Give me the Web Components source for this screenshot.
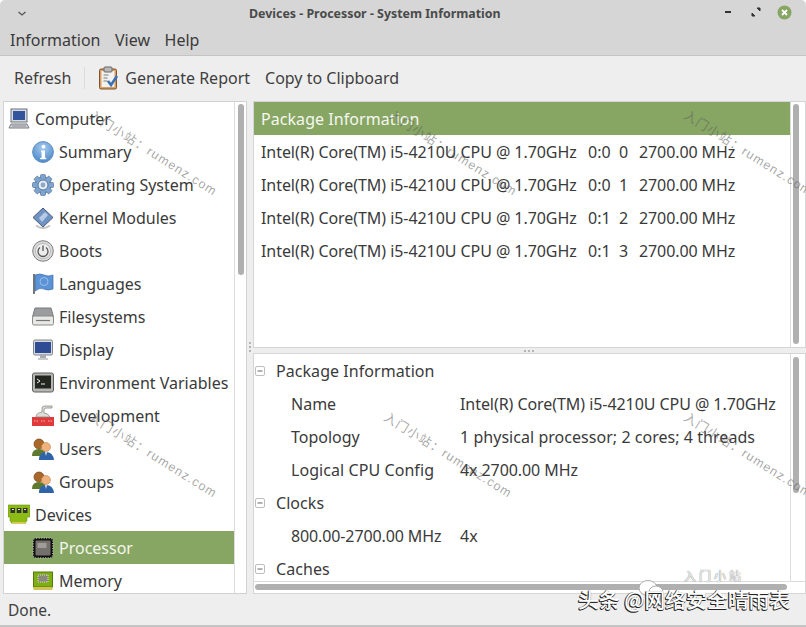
<!DOCTYPE html>
<html lang="en"><head><meta charset="utf-8"><title>Devices - Processor - System Information</title>
<style>
html,body{margin:0;padding:0;background:#fff;overflow:hidden}
body{width:806px;height:627px;font:16px/22px "Noto Sans","Open Sans",sans-serif;color:#3a3a3a}
</style></head><body>
<template id="t-icons">
<svg viewBox="0 0 22 22" data-k="computer"><rect x="3" y="1" width="16" height="13" fill="#d8dce2" stroke="#6b7078"/><rect x="5" y="3" width="12" height="9" fill="#31549c"/><path d="M3 16h16l2 4H1z" fill="#cfd2d6" stroke="#7a7d82"/><path d="M4 18h14" stroke="#8a8d92"/></svg>
<svg viewBox="0 0 22 22" data-k="info"><defs><radialGradient id="ig" cx=".5" cy=".3" r=".8"><stop offset="0" stop-color="#a9cdf0"/><stop offset="1" stop-color="#3f7ec2"/></radialGradient></defs><circle cx="11" cy="11" r="10.400" fill="url(#ig)" stroke="#5d8fc4"/><circle cx="11.500" cy="5.600" r="1.900" fill="#fff"/><path d="M9 9.400h4v7.400h1.300v1.400H8.200v-1.400h1.400v-6H9z" fill="#fff"/></svg>
<svg viewBox="0 0 22 22" data-k="gear"><g fill="#7ea4cf" stroke="#54759c" stroke-width=".7"><circle cx="11" cy="11" r="8.200"/><rect x="8.500" y=".5" width="5" height="21" rx="1"/><rect x="8.500" y=".5" width="5" height="21" rx="1" transform="rotate(45 11 11)"/><rect x="8.500" y=".5" width="5" height="21" rx="1" transform="rotate(90 11 11)"/><rect x="8.500" y=".5" width="5" height="21" rx="1" transform="rotate(135 11 11)"/></g><circle cx="11" cy="11" r="7" fill="#7ea4cf"/><circle cx="11" cy="11" r="5" fill="#e6edf5" stroke="#54759c"/><circle cx="11" cy="11" r="2.400" fill="#8fa8c4"/></svg>
<svg viewBox="0 0 22 22" data-k="kernel"><path d="M11 1l10 9.500L11 20 1 10.500z" fill="#6f93c4" stroke="#4b5b72"/><path d="M7 11l6-6 3 3-6 7z" fill="#b7cbe4"/><path d="M4 18.500q7 5 14 0" fill="none" stroke="#c4c4c4" stroke-width="2"/></svg>
<svg viewBox="0 0 22 22" data-k="boots"><circle cx="11" cy="11" r="10.300" fill="#d9d9d9" stroke="#808080"/><circle cx="11" cy="11" r="7.600" fill="#ececec" stroke="#bcbcbc"/><path d="M8 7.500a5 5 0 1 0 6 0" fill="none" stroke="#555" stroke-width="1.300"/><path d="M11 5.500v5.500" stroke="#555" stroke-width="1.300"/></svg>
<svg viewBox="0 0 22 22" data-k="lang"><path d="M1 1h2v20H1z" fill="#777"/><path d="M3 2q5-2 9 0t9 0v14q-5 2-9 0t-9 2z" fill="#5b93d6" stroke="#3e6ea8" stroke-width=".7"/><circle cx="12" cy="8.500" r="4" fill="none" stroke="#9cc1ea"/></svg>
<svg viewBox="0 0 22 22" data-k="fs"><path d="M3 2h16l2.500 9H.5z" fill="#9a9c9e" stroke="#77797b"/><rect x=".5" y="10" width="21" height="9" rx="1.500" fill="#e8e8e6" stroke="#8a8a88"/><path d="M4 14.500h14" stroke="#777" stroke-width="1.200"/></svg>
<svg viewBox="0 0 22 22" data-k="display"><rect x="1.500" y="1" width="19" height="15" rx="1.500" fill="#d6d9dd" stroke="#80858c"/><rect x="3" y="3" width="16" height="11" fill="#2f4c94"/><path d="M8 16h6v3H8z" fill="#a9acb0"/><path d="M6 19h10v2H6z" fill="#c8cacc"/></svg>
<svg viewBox="0 0 22 22" data-k="env"><rect x=".5" y="1" width="21" height="19" rx="2" fill="#b6b6b2" stroke="#5f5f5c"/><rect x="3" y="3.500" width="16" height="13" fill="#23261f"/><path d="M5 7l3 2-3 2" fill="none" stroke="#eee"/><path d="M9 12h4" stroke="#eee"/></svg>
<svg viewBox="0 0 22 22" data-k="dev"><path d="M0 12h22v9H0z" fill="#e03a3a"/><path d="M4 12q0-4 6-5V3q0-2 3-2h7v2h-6q-2 0-2 2v3q4 0 6 4z" fill="#dcdcd8" stroke="#8b8b86" stroke-width=".8"/><path d="M2 16h5M9 16h5M16 16h4" stroke="#f4b0b0" stroke-dasharray="1.500 1"/></svg>
<svg viewBox="0 0 22 22" data-k="users"><circle cx="7" cy="6" r="5" fill="#a9682a" stroke="#6e4519" stroke-width=".7"/><path d="M0 18q0-7 7-7t8 7z" fill="#5e7a2d"/><circle cx="14" cy="9" r="4.500" fill="#f0b27c" stroke="#c0854e" stroke-width=".6"/><path d="M7 22q0-8 7-8t8 8z" fill="#2f64a8"/><path d="M13 14h2l-1 4z" fill="#e7eef7"/></svg>
<svg viewBox="0 0 22 22" data-k="devices"><path d="M0 1h22v12h-3v4h-1v2H3v-2H2v-4H0z" fill="#8cbc14" stroke="#6c9410" stroke-width=".6"/><rect x="2.500" y="4" width="4.500" height="5" fill="#333"/><rect x="8.800" y="4" width="4.500" height="5" fill="#333"/><rect x="15" y="4" width="4.500" height="5" fill="#333"/><path d="M4 5.500h2M10 5.500h2M16 5.500h2" stroke="#d8e6b0"/><path d="M4 18h14v2H4z" fill="#d5c95a"/></svg>
<svg viewBox="0 0 22 22" data-k="cpu"><rect x="1" y="1" width="20" height="20" rx="3" fill="#111"/><rect x="1.200" y="1.200" width="19.600" height="19.600" rx="3" fill="none" stroke="#ddd" stroke-dasharray="1 1.500"/><rect x="3.500" y="3.500" width="15" height="15" rx="1" fill="#74706c"/><path d="M5.500 6h9v5h-9z" fill="#a09c98"/></svg>
<svg viewBox="0 0 22 22" data-k="memory"><rect x="1.500" y="2" width="19" height="15" fill="#7fae14" stroke="#567a08"/><rect x="6" y="5" width="10" height="7" fill="#8a8a7a" stroke="#ddd" stroke-dasharray="1 1"/><path d="M1.500 17h19v3h-19z" fill="#d0c458"/></svg>
</template>

<script>
const iconTpl=document.getElementById('t-icons');
class BaseEl extends HTMLElement{
  render(css,html){const s=this.attachShadow({mode:'open'});s.innerHTML=`<style>${css}</style>${html}`;return s;}
}
class TitleBar extends BaseEl{connectedCallback(){this.render(`
  :host{display:flex;align-items:center;height:27px;font:700 12.400px/16px "Noto Sans",sans-serif;color:#4a4a4a}
  .l{width:249px;box-sizing:border-box;padding-left:16px;display:flex;flex:none}
  .r{margin-left:auto;display:flex;align-items:center;padding-right:8px;padding-bottom:3px}
  svg{display:block}
  .b{width:28px;display:flex;justify-content:center}
  `,`<div class="l"><svg width="12" height="8" viewBox="0 0 12 8"><path d="M2.500 2l3.500 3 3.500-3" fill="none" stroke="#555" stroke-width="1.300"/></svg></div>
  <div>Devices - Processor - System Information</div>
  <div class="r"><span class="b"><svg width="8" height="4" viewBox="0 0 8 4"><path d="M1 2h6" stroke="#333" stroke-width="2"/></svg></span>
  <span class="b"><svg width="10" height="10" viewBox="0 0 10 10"><path d="M6 1h3v3zM4 9H1V6z" fill="#333" stroke="#333"/></svg></span>
  <span class="b"><svg width="15" height="15" viewBox="0 0 15 15"><circle cx="7.500" cy="7.500" r="7" fill="#87a663"/><path d="M5 5l5 5M10 5l-5 5" stroke="#fff" stroke-width="1.800"/></svg></span></div>`)}}
class MenuBar extends BaseEl{connectedCallback(){this.render(`
  :host{display:flex;gap:14.500px;height:28px;padding-left:10px;align-items:center;box-sizing:border-box;padding-bottom:3px;font-size:16px}
  `,`<slot></slot>`)}}
class ToolBar extends BaseEl{connectedCallback(){this.render(`
  :host{display:flex;align-items:center;height:46px;background:#eeeeee;border-top:1px solid #c4c4c4;box-sizing:border-box;padding:0 0 1px 14px;font-size:16px;color:#3f3f3f}
  .sep{width:1px;height:22px;background:#dcdcdc;margin:0 13px 0 13px}
  .g{display:flex;align-items:center;gap:5px}
  .c{margin-left:15px}
  `,`<span>Refresh</span><span class="sep"></span>
  <span class="g"><svg width="22" height="24" viewBox="0 0 22 24"><rect x="1.500" y="3" width="17" height="20" rx="1.500" fill="#d69e63" stroke="#80522a"/><rect x="3.500" y="5" width="13" height="16" fill="#f1f1ee"/><rect x="6" y="1" width="8" height="5" rx="1" fill="#b9b9b9" stroke="#666"/><path d="M5.500 9h5M5.500 12h4M5.500 15h4" stroke="#7d7d7d"/><path d="M10 15l3 4 6-9" fill="none" stroke="#3d6fb5" stroke-width="2.600"/></svg>Generate Report</span>
  <span class="c">Copy to Clipboard</span>`)}}
class VScroll extends BaseEl{connectedCallback(){this.render(`
  :host{display:block;position:relative;background:#fff;width:${this.getAttribute('w')||15}px;flex:none;box-sizing:border-box;border-left:1px solid #dcdcdc}
  i{display:block;position:absolute;left:${this.getAttribute('l')||2}px;width:6px;border-radius:3px;background:#b0b0b0;top:${this.getAttribute('top')||2}px;height:${this.getAttribute('h')}px}
  `,`<i></i>`)}}
class TreeRow extends BaseEl{connectedCallback(){
  const k=this.getAttribute('icon');const lvl=+this.getAttribute('lvl')||0;const sel=this.hasAttribute('sel');
  this.render(`
  :host{display:flex;align-items:center;height:33px;box-sizing:border-box;padding-left:${lvl?28:4}px;gap:5px;white-space:nowrap;font-size:16px;${sel?'background:#87a663;color:#f3f6ee;':''}}
  svg{display:block;width:22px;height:22px;flex:none}
  `,`<slot></slot>`);
  const svg=iconTpl.content.querySelector(`svg[data-k="${k}"]`).cloneNode(true);
  svg.setAttribute('width','22');svg.setAttribute('height','22');
  this.shadowRoot.insertBefore(svg,this.shadowRoot.querySelector('slot'));
}}
class SideTree extends BaseEl{connectedCallback(){this.render(`
  :host{display:flex;background:#fff;border:1px solid #d2d2d2;box-sizing:border-box;overflow:hidden;min-height:0}
  .list{flex:1;min-width:0;overflow:hidden}
  `,`<div class="list"><slot></slot></div><v-scroll w="12" l="3" top="2" h="171"></v-scroll>`)}}
class CpuList extends BaseEl{connectedCallback(){this.render(`
  :host{display:flex;background:#fff;height:247px;box-sizing:border-box;border:1px solid #d6d6d6}
  .m{flex:1;min-width:0}
  .h{height:33px;background:#87a663;color:#f5f7f0;display:flex;align-items:center;padding-left:7px;letter-spacing:.06px}
  `,`<div class="m"><div class="h">Package Information</div><slot></slot></div><v-scroll top="2" h="240"></v-scroll>`)}}
class CpuRow extends BaseEl{connectedCallback(){this.render(`
  :host{display:grid;grid-template-columns:327px 31px 20px auto;height:33px;align-items:center;padding-left:7px;white-space:nowrap}
  .m{letter-spacing:-.06px}
  .f{letter-spacing:-.1px}
  `,`<span class="m">${this.getAttribute('m')}</span><span>${this.getAttribute('a')}</span><span>${this.getAttribute('b')}</span><span class="f">${this.getAttribute('f')}</span>`)}}
class DetailPane extends BaseEl{connectedCallback(){this.render(`
  :host{display:flex;flex-direction:column;flex:1;min-height:0;background:#fff;box-sizing:border-box;border:1px solid #d6d6d6;overflow:hidden}
  .top{display:flex;flex:1;min-height:0}
  .m{flex:1;min-width:0;overflow:hidden}
  .hs{height:12px;flex:none;position:relative;border-top:1px solid #dcdcdc;box-sizing:border-box;background:#fff}
  .hs i{position:absolute;left:1px;right:18px;top:2px;height:6px;border-radius:3px;background:#b0b0b0}
  `,`<div class="top"><div class="m"><slot></slot></div><v-scroll top="3" h="136"></v-scroll></div><div class="hs"><i></i></div>`)}}
class DetailHead extends BaseEl{connectedCallback(){this.render(`
  :host{display:flex;align-items:center;height:33px;padding-left:1px;gap:11px;letter-spacing:.06px}
  svg{display:block;flex:none}
  `,`<svg width="10" height="10" viewBox="0 0 10 10"><rect x=".5" y=".5" width="9" height="9" rx="1.500" fill="#fff" stroke="#bdbdbd"/><path d="M2.500 5h5" stroke="#666"/></svg><slot></slot>`)}}
class DetailRow extends BaseEl{connectedCallback(){this.render(`
  :host{display:grid;grid-template-columns:169px auto;height:33px;align-items:center;padding-left:37px;white-space:nowrap}
  .k{letter-spacing:${this.getAttribute('ks')||0}px}
  .v{letter-spacing:${this.getAttribute('vs')||0}px}
  `,`<span class="k">${this.getAttribute('k')}</span><span class="v">${this.getAttribute('v')}</span>`)}}
class StatusBar extends BaseEl{connectedCallback(){this.render(`
  :host{display:flex;align-items:center;height:31px;padding-left:8px;background:#eeeeee;box-sizing:border-box;font-size:15.500px;color:#3f3f3f}
  `,`<slot></slot>`)}}
class WaterMark extends BaseEl{connectedCallback(){this.render(`
  :host{position:absolute;left:${this.getAttribute('x')}px;top:${this.getAttribute('y')}px;transform-origin:0 50%;transform:rotate(32deg);font:12.500px/16px "Liberation Sans","Noto Sans CJK SC",sans-serif;letter-spacing:1.150px;color:rgba(90,90,90,.55);white-space:nowrap;pointer-events:none}
  `,`入门小站：rumenz.com`)}}
class AppWindow extends BaseEl{connectedCallback(){this.render(`
  :host{display:flex;flex-direction:column;position:relative;width:806px;height:627px;background:#eeeeee;box-sizing:border-box;border-bottom:2px solid #c4c4c4;overflow:hidden;border-radius:5px 5px 0 0}
  .chrome{background:#d6d6d6;flex:none}
  .body{flex:1;min-height:0;display:grid;grid-template-columns:244px 1fr;gap:6px;padding:0 0 0 3px;background:#eee}
  .right{display:flex;flex-direction:column;min-height:0}
  .grip{height:5px;flex:none;display:flex;justify-content:center;align-items:center;background:#eee}
  .grip b{width:13px;height:2px;background:radial-gradient(circle,#b4b4b4 1px,transparent 1.200px) 0 0/4px 2px}
  .vg{display:flex;align-items:center;justify-content:center;position:absolute;left:247px;top:340px;width:6px;height:14px}
  .vg b{width:2px;height:13px;background:radial-gradient(circle,#b4b4b4 1px,transparent 1.200px) 0 0/2px 4px}
  `,`<div class="chrome"><slot name="title"></slot><slot name="menu"></slot></div><slot name="tools"></slot>
  <div class="body"><slot name="side"></slot><div class="right"><slot name="list"></slot><div class="grip"><b></b></div><slot name="detail"></slot></div></div>
  <div class="vg"><b></b></div>
  <slot name="status"></slot><slot name="marks"></slot>`)}}
class SignMark extends BaseEl{connectedCallback(){this.render(`
  :host{position:absolute;left:578px;top:586px;font:500 20.800px/26px "Noto Sans CJK SC",sans-serif;color:#fff;white-space:nowrap;text-shadow:-1px 1px 0 #222,-1px 0 0 #555,0 1px 0 #333}
  .w{position:absolute;left:106px;top:-19px;font:400 12px/18px "Noto Sans CJK SC",sans-serif;letter-spacing:3px;color:rgba(255,255,255,.9);text-shadow:0 0 1px #888,0 0 1px #888}
  .i{position:absolute;left:60px;top:-7px}
  `,`<svg class="i" width="26" height="20" viewBox="0 0 26 20"><ellipse cx="10" cy="9" rx="9" ry="7.500" fill="#fff" stroke="#aaa"/><ellipse cx="18" cy="13" rx="7" ry="6" fill="#fff" stroke="#aaa"/></svg><span class="w">入门小站</span><span style="position:relative">头条 @网络安全晴雨表</span>`)}}
for(const [n,c] of Object.entries({'title-bar':TitleBar,'menu-bar':MenuBar,'tool-bar':ToolBar,'v-scroll':VScroll,'tree-row':TreeRow,'side-tree':SideTree,'cpu-list':CpuList,'cpu-row':CpuRow,'detail-pane':DetailPane,'detail-head':DetailHead,'detail-row':DetailRow,'status-bar':StatusBar,'water-mark':WaterMark,'sign-mark':SignMark,'app-window':AppWindow}))customElements.define(n,c);
</script>

<app-window>
<title-bar slot="title"></title-bar>
<menu-bar slot="menu"><span>Information</span><span>View</span><span>Help</span></menu-bar>
<tool-bar slot="tools"></tool-bar>
<side-tree slot="side">
<tree-row icon="computer">Computer</tree-row>
<tree-row icon="info" lvl="1">Summary</tree-row>
<tree-row icon="gear" lvl="1">Operating System</tree-row>
<tree-row icon="kernel" lvl="1">Kernel Modules</tree-row>
<tree-row icon="boots" lvl="1">Boots</tree-row>
<tree-row icon="lang" lvl="1">Languages</tree-row>
<tree-row icon="fs" lvl="1">Filesystems</tree-row>
<tree-row icon="display" lvl="1">Display</tree-row>
<tree-row icon="env" lvl="1">Environment Variables</tree-row>
<tree-row icon="dev" lvl="1">Development</tree-row>
<tree-row icon="users" lvl="1">Users</tree-row>
<tree-row icon="users" lvl="1">Groups</tree-row>
<tree-row icon="devices">Devices</tree-row>
<tree-row icon="cpu" lvl="1" sel>Processor</tree-row>
<tree-row icon="memory" lvl="1">Memory</tree-row>
</side-tree>
<cpu-list slot="list">
<cpu-row m="Intel(R) Core(TM) i5-4210U CPU @ 1.70GHz" a="0:0" b="0" f="2700.00 MHz"></cpu-row>
<cpu-row m="Intel(R) Core(TM) i5-4210U CPU @ 1.70GHz" a="0:0" b="1" f="2700.00 MHz"></cpu-row>
<cpu-row m="Intel(R) Core(TM) i5-4210U CPU @ 1.70GHz" a="0:1" b="2" f="2700.00 MHz"></cpu-row>
<cpu-row m="Intel(R) Core(TM) i5-4210U CPU @ 1.70GHz" a="0:1" b="3" f="2700.00 MHz"></cpu-row>
</cpu-list>
<detail-pane slot="detail">
<detail-head>Package Information</detail-head>
<detail-row k="Name" v="Intel(R) Core(TM) i5-4210U CPU @ 1.70GHz" vs="-.06"></detail-row>
<detail-row k="Topology" v="1 physical processor; 2 cores; 4 threads" vs=".04"></detail-row>
<detail-row k="Logical CPU Config" v="4x 2700.00 MHz" ks=".07" vs="-.08"></detail-row>
<detail-head>Clocks</detail-head>
<detail-row k="800.00-2700.00 MHz" v="4x" ks="-.12"></detail-row>
<detail-head>Caches</detail-head>
</detail-pane>
<status-bar slot="status">Done.</status-bar>
<span slot="marks">
<water-mark x="90" y="106"></water-mark><water-mark x="390" y="106"></water-mark><water-mark x="685" y="106"></water-mark>
<water-mark x="90" y="408"></water-mark><water-mark x="385" y="408"></water-mark><water-mark x="685" y="408"></water-mark>
<sign-mark></sign-mark>
</span>
</app-window>
</body></html>
